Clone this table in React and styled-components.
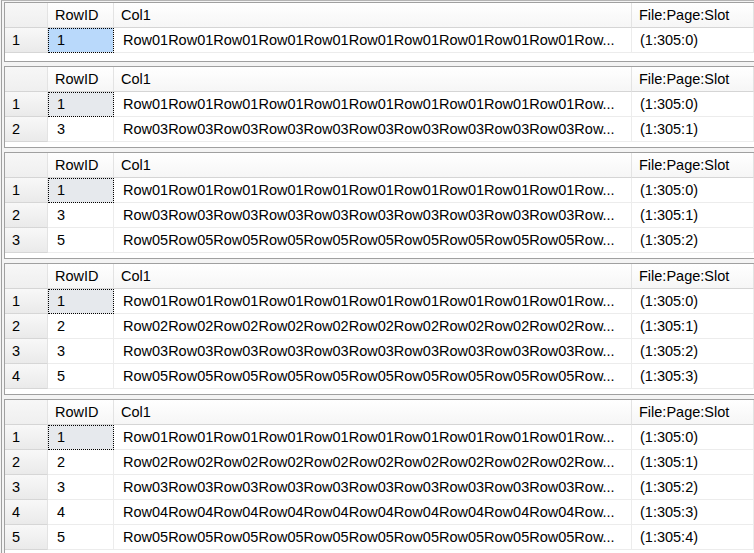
import React from "react";
import styled, { createGlobalStyle } from "styled-components";

const GlobalStyle = createGlobalStyle`
  html, body {
    margin: 0;
    padding: 0;
    background: #f4f4f4;
    overflow: hidden;
  }
  body {
    font-family: "Liberation Sans", Arial, sans-serif;
    font-size: 14.5px;
    color: #000;
  }
`;

const Wrapper = styled.div`
  margin-left: 1px;
  border-left: 1px solid #a0a0a0;
  border-top: 1px solid #b4b4b4;
  padding: 1px 0 0 2px;
  display: flex;
  flex-direction: column;
  gap: 4px;
`;

const Panel = styled.div`
  border: 1px solid #a0a0a0;
  border-right: none;
  background: #fff;
  padding-bottom: ${(p) => p.$tail}px;
`;

const Grid = styled.div`
  display: grid;
  grid-template-columns: 43px 66px 518px 1fr;
`;

const Corner = styled.div`
  height: 24px;
  background: linear-gradient(#f7f7f7, #efefef);
  border-right: 1px solid #e3e3e3;
  border-bottom: 1px solid #d5d5d5;
`;

const HeadCell = styled.div`
  height: 24px;
  line-height: 24px;
  padding-left: 7px;
  background: linear-gradient(#ffffff, #f6f6f6);
  border-right: 1px solid #e3e3e3;
  border-bottom: 1px solid #d5d5d5;
  white-space: nowrap;
  overflow: hidden;
`;

const RowHead = styled.div`
  height: 24px;
  line-height: 24px;
  padding-left: 7px;
  background: linear-gradient(#f8f8f8, #eaeaea);
  border-right: 1px solid #e3e3e3;
  border-bottom: 1px solid #d6d6d6;
`;

const Cell = styled.div`
  height: 24px;
  line-height: 24px;
  padding-left: ${(p) => p.$pad || 9}px;
  border-right: 1px solid #ececec;
  border-bottom: 1px solid #ececec;
  white-space: nowrap;
  overflow: hidden;
  background: ${(p) =>
    p.$selected === "active" ? "#b9d9fb" : p.$selected ? "#e6e9ed" : "#fff"};
  outline: ${(p) => (p.$selected ? "1px dotted #000" : "none")};
  outline-offset: -1px;
`;

const results = [
  { ids: [1], active: true, tail: 8 },
  { ids: [1, 3], tail: 5 },
  { ids: [1, 3, 5], tail: 5 },
  { ids: [1, 2, 3, 5], tail: 5 },
  { ids: [1, 2, 3, 4, 5], tail: 5 },
];

function colText(id) {
  const part = `Row0${id}`;
  return part.repeat(10) + "Row...";
}

function ResultGrid({ ids, active, tail }) {
  return (
    <Panel $tail={tail}>
      <Grid>
        <Corner />
        <HeadCell>RowID</HeadCell>
        <HeadCell>Col1</HeadCell>
        <HeadCell>File:Page:Slot</HeadCell>
        {ids.map((id, i) => (
          <React.Fragment key={i}>
            <RowHead>{i + 1}</RowHead>
            <Cell $selected={i === 0 ? (active ? "active" : "inactive") : null}>
              {id}
            </Cell>
            <Cell>{colText(id)}</Cell>
            <Cell $pad={8}>{`(1:305:${i})`}</Cell>
          </React.Fragment>
        ))}
      </Grid>
    </Panel>
  );
}

export default function App() {
  return (
    <>
      <GlobalStyle />
      <Wrapper>
        {results.map((r, i) => (
          <ResultGrid key={i} {...r} />
        ))}
      </Wrapper>
    </>
  );
}
